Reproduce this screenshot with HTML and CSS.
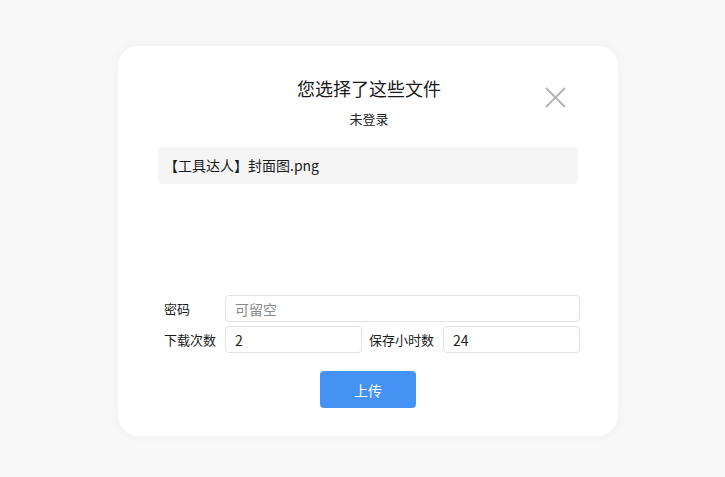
FILE: index.html
```html
<!DOCTYPE html>
<html lang="zh">
<head>
<meta charset="utf-8">
<link rel="stylesheet" href="styles.css">
</head>
<body>
<div class="card">
  <button class="close" aria-label="关闭">
    <svg width="21" height="21" viewBox="0 0 21 21"><path d="M1 1L20 20M20 1L1 20" stroke="#b5b5b5" stroke-width="2" fill="none"/></svg>
  </button>
  <h1 class="title">您选择了这些文件</h1>
  <div class="subtitle">未登录</div>
  <div class="files">
    <div class="file">【工具达人】封面图.png</div>
  </div>
  <div class="form">
    <label class="label">密码</label>
    <input class="input wide" placeholder="可留空">
    <label class="label">下载次数</label>
    <input class="input" value="2">
    <label class="label mid">保存小时数</label>
    <input class="input" value="24">
  </div>
  <div class="actions"><button class="upload">上传</button></div>
</div>
</body>
</html>
```
FILE: styles.css
```css
html, body { margin: 0; padding: 0; }
body {
  background: #f8f8f8;
  font-family: "Noto Sans CJK SC", "Noto Sans", sans-serif;
  color: #222;
  width: 725px;
  height: 477px;
  overflow: hidden;
}
.card {
  position: relative;
  box-sizing: border-box;
  width: 500px;
  height: 390px;
  margin: 46px 0 0 118px;
  background: #fff;
  border-radius: 20px;
  box-shadow: 0 0 12px rgba(0,0,0,0.04);
  padding: 30px 38px 0 40px;
}
.close {
  position: absolute;
  top: 87px;
  right: 52px;
  top: 41px;
  width: 21px;
  height: 21px;
  padding: 0;
  border: 0;
  background: none;
  line-height: 0;
}
.title {
  margin: 0;
  font-size: 18px;
  font-weight: 400;
  line-height: 24px;
  text-align: center;
  color: #1a1a1a;
}
.subtitle {
  margin-top: 10px;
  font-size: 13px;
  line-height: 18px;
  text-align: center;
}
.files {
  margin-top: 19px;
  height: 148px;
  width: 420px;
}
.file {
  background: #f5f5f5;
  border-radius: 4px;
  height: 37px;
  line-height: 37px;
  padding-left: 6px;
  font-size: 14px;
  color: #1a1a1a;
}
.form {
  display: grid;
  grid-template-columns: 61px 137px 81px 137px;
  grid-auto-rows: 27px;
  row-gap: 4px;
  margin-left: 6px;
}
.label {
  font-size: 13px;
  line-height: 27px;
  color: #1a1a1a;
  white-space: nowrap;
}
.mid { padding-left: 7px; }
.input {
  box-sizing: border-box;
  height: 27px;
  width: 100%;
  border: 1px solid #e3e3e3;
  border-radius: 4px;
  padding: 0 9px;
  font-family: "Noto Sans CJK SC", "Noto Sans", sans-serif;
  font-size: 14px;
  color: #222;
  outline: none;
  margin: 0;
}
.input::placeholder { color: #8a8a8a; }
.wide { grid-column: 2 / 5; }
.actions {
  display: flex;
  justify-content: center;
  margin-top: 18px;
  padding-right: 2px;
}
.upload {
  width: 96px;
  height: 37px;
  border: 0;
  border-radius: 4px;
  background: #4492f4;
  color: #fff;
  font-family: "Noto Sans CJK SC", "Noto Sans", sans-serif;
  font-size: 14px;
  padding: 0;
}
```
